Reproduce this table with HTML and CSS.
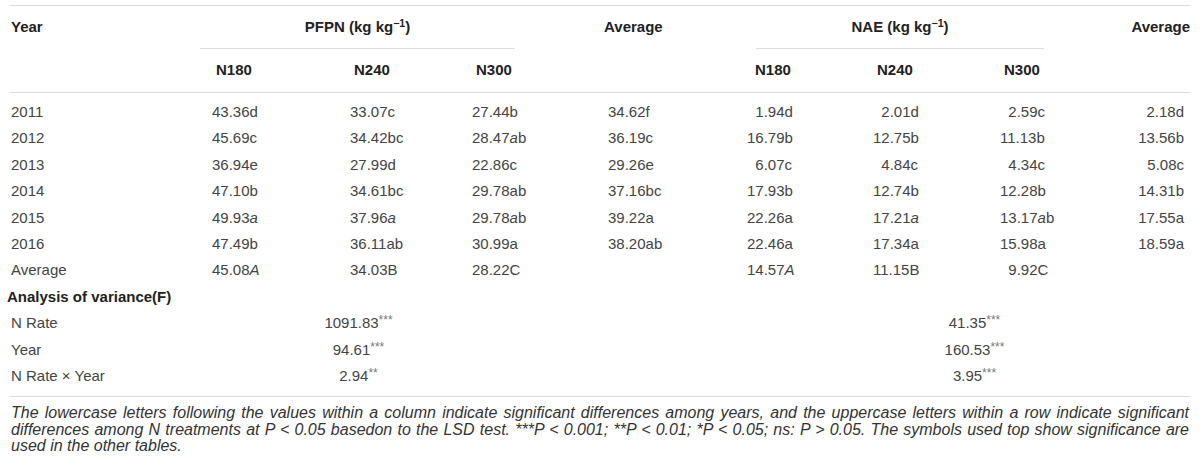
FILE: index.html
```html
<!DOCTYPE html>
<html lang="en">
<head>
  <meta charset="UTF-8">
  <meta name="viewport" content="width=device-width, initial-scale=1.0">
  <title>PFPN and NAE by year</title>
  <link rel="stylesheet" href="styles.css">
</head>
<body>
  <div class="wrap">
    <table class="tbl">
      <colgroup>
        <col class="c-year">
        <col class="c-p1">
        <col class="c-p2">
        <col class="c-p3">
        <col class="c-pavg">
        <col class="c-n1">
        <col class="c-n2">
        <col class="c-n3">
        <col class="c-navg">
      </colgroup>
      <thead>
        <tr class="head-top">
          <th class="first">Year</th>
          <th colspan="3" class="group"><div class="rule rule-pfpn">PFPN (kg kg<sup>−1</sup>)</div></th>
          <th class="avg-l">Average</th>
          <th colspan="3" class="group"><div class="rule rule-nae">NAE (kg kg<sup>−1</sup>)</div></th>
          <th class="right">Average</th>
        </tr>
        <tr class="head-sub">
          <th></th>
          <th>N180</th>
          <th>N240</th>
          <th>N300</th>
          <th></th>
          <th class="nae-h">N180</th>
          <th>N240</th>
          <th>N300</th>
          <th></th>
        </tr>
      </thead>
      <tbody>
        <tr class="row-first">
          <td class="first">2011</td>
          <td>43.36d</td><td>33.07c</td><td>27.44b</td><td>34.62f</td>
          <td class="one">1.94d</td><td class="one">2.01d</td><td class="one">2.59c</td><td class="right">2.18d</td>
        </tr>
        <tr>
          <td class="first">2012</td>
          <td>45.69c</td><td>34.42bc</td><td>28.47<i>a</i>b</td><td>36.19c</td>
          <td>16.79b</td><td>12.75b</td><td>11.13b</td><td class="right">13.56b</td>
        </tr>
        <tr>
          <td class="first">2013</td>
          <td>36.94e</td><td>27.99d</td><td>22.86c</td><td>29.26e</td>
          <td class="one">6.07c</td><td class="one">4.84c</td><td class="one">4.34c</td><td class="right">5.08c</td>
        </tr>
        <tr>
          <td class="first">2014</td>
          <td>47.10b</td><td>34.61bc</td><td>29.78ab</td><td>37.16bc</td>
          <td>17.93b</td><td>12.74b</td><td>12.28b</td><td class="right">14.31b</td>
        </tr>
        <tr>
          <td class="first">2015</td>
          <td>49.93<i>a</i></td><td>37.96<i>a</i></td><td>29.78<i>a</i>b</td><td>39.22a</td>
          <td>22.26a</td><td>17.21<i>a</i></td><td>13.17<i>a</i>b</td><td class="right">17.55a</td>
        </tr>
        <tr>
          <td class="first">2016</td>
          <td>47.49b</td><td>36.11ab</td><td>30.99a</td><td>38.20ab</td>
          <td>22.46a</td><td>17.34a</td><td>15.98a</td><td class="right">18.59a</td>
        </tr>
        <tr>
          <td class="first">Average</td>
          <td>45.08<i>A</i></td><td>34.03B</td><td>28.22C</td><td></td>
          <td>14.57<i>A</i></td><td>11.15B</td><td class="one">9.92C</td><td></td>
        </tr>
        <tr>
          <td colspan="9" class="section">Analysis of variance(F)</td>
        </tr>
        <tr>
          <td class="first">N Rate</td>
          <td colspan="3" class="f-pfpn">1091.83<sup>***</sup></td>
          <td></td>
          <td colspan="4" class="f-nae">41.35<sup>***</sup></td>
        </tr>
        <tr>
          <td class="first">Year</td>
          <td colspan="3" class="f-pfpn">94.61<sup>***</sup></td>
          <td></td>
          <td colspan="4" class="f-nae">160.53<sup>***</sup></td>
        </tr>
        <tr class="row-last">
          <td class="first">N Rate × Year</td>
          <td colspan="3" class="f-pfpn">2.94<sup>**</sup></td>
          <td></td>
          <td colspan="4" class="f-nae">3.95<sup>***</sup></td>
        </tr>
      </tbody>
    </table>

    <p class="note">The lowercase letters following the values within a column indicate significant differences among years, and the uppercase letters within a row indicate significant differences among N treatments at P &lt; 0.05 basedon to the LSD test. ***P &lt; 0.001; **P &lt; 0.01; *P &lt; 0.05; ns: P &gt; 0.05. The symbols used top show significance are used in the other tables.</p>
  </div>
</body>
</html>
```

FILE: styles.css
```css
body {
  margin: 0;
  background: #fff;
  font-family: "Liberation Sans", Arial, sans-serif;
  font-size: 15px;
  color: #444;
}
.wrap {
  padding: 5px 10px 0;
}
.tbl {
  width: 1180px;
  table-layout: fixed;
  border-collapse: collapse;
  border-top: 1px solid #dcdcdc;
  border-bottom: 1px solid #dcdcdc;
  line-height: 18px;
}
.c-year { width: 190px; }
.c-p1 { width: 138px; }
.c-p2 { width: 122px; }
.c-p3 { width: 136px; }
.c-pavg { width: 139px; }
.c-n1 { width: 126px; }
.c-n2 { width: 127px; }
.c-n3 { width: 122px; }
.c-navg { width: 80px; }

th {
  color: #222;
  font-weight: bold;
  text-align: left;
  vertical-align: top;
  white-space: nowrap;
}
td {
  text-align: left;
  padding: 4px 0 4.4px 12px;
  white-space: nowrap;
}
sup {
  font-size: 0.7em;
  line-height: 0;
  vertical-align: 0.45em;
}
td sup {
  font-size: 0.8em;
  vertical-align: 0.3em;
  color: #777;
}

/* header */
.head-top th {
  padding: 12px 0 0 12px;
}
.head-top th.group {
  padding: 0;
  text-align: center;
}
.head-top th.avg-l {
  padding-left: 8px;
}
.rule {
  padding: 12px 0;
  border-bottom: 1px solid #dcdcdc;
}
.rule-pfpn {
  margin: 0 81px 0 0;
}
.rule-nae {
  margin: 0 66px 0 21px;
}
.head-sub th {
  padding: 12px 0 13px 16px;
  border-bottom: 1px solid #dcdcdc;
}
.head-sub th.nae-h {
  padding-left: 20px;
}
.tbl th.first,
.tbl td.first {
  padding-left: 1px;
}
.tbl th.right {
  text-align: right;
  padding-right: 0;
}
.tbl td.right {
  text-align: right;
  padding-right: 6px;
}

/* body */
.row-first td {
  padding-top: 10px;
}
.row-last td {
  padding-bottom: 11px;
}
.tbl td.one {
  padding-left: calc(12px + 0.556em);
}
.tbl td.section {
  padding-left: 0;
  text-indent: -3px;
  font-weight: bold;
  color: #222;
}
.tbl td.f-pfpn {
  text-align: center;
  padding-left: 0;
  padding-right: 79px;
}
.tbl td.f-nae {
  text-align: center;
  padding-left: 24px;
}

.note {
  margin: 8px 0 0;
  padding: 0 1px;
  font-size: 16px;
  font-style: italic;
  line-height: 16.7px;
  text-align: justify;
  color: #333;
}
```
